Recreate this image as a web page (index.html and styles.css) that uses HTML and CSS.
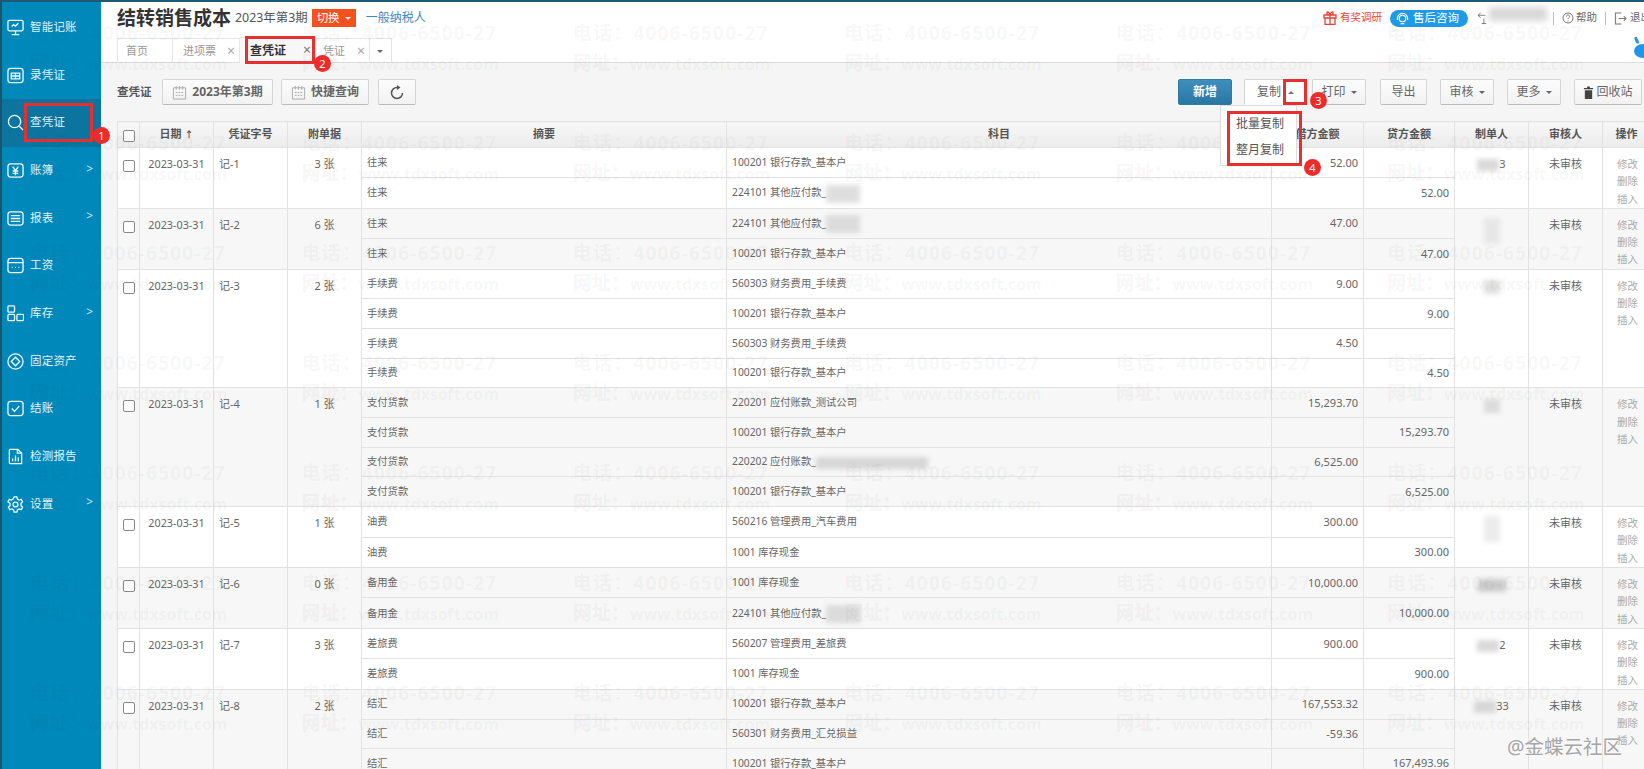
FILE: index.html
```html
<!DOCTYPE html>
<html lang="zh-CN">
<head>
<meta charset="utf-8">
<title>查凭证</title>
<link rel="stylesheet" href="styles.css">
</head>
<body>
<div class="topline"></div>
<div class="app">
  <nav class="side">
    <a class="nav"><svg class="ni" viewBox="0 0 18 18"><rect x="1" y="1.5" width="16" height="11" rx="1.5"/><path d="M9 12.5V16M5 16.5h8M5 8l2-2 2 1.5 3-3"/></svg><span>智能记账</span></a>
    <a class="nav"><svg class="ni" viewBox="0 0 18 18"><rect x="1" y="1.5" width="16" height="15" rx="3"/><path d="M4 6.5h10M4 12.5h10M4.5 6.5v6h9v-6M9 6.5v6M4.5 9.5h9"/></svg><span>录凭证</span></a>
    <a class="nav on"><svg class="ni" viewBox="0 0 18 18"><circle cx="8" cy="8" r="6.5"/><path d="M13 13l4 4"/></svg><span>查凭证</span></a>
    <a class="nav"><svg class="ni" viewBox="0 0 18 18"><rect x="1" y="2" width="16" height="14" rx="3"/><path d="M6 5l3 4 3-4M9 9v5M6 9.5h6M6 12h6"/></svg><span>账簿</span><i>&gt;</i></a>
    <a class="nav"><svg class="ni" viewBox="0 0 18 18"><rect x="1" y="2" width="16" height="14" rx="3"/><path d="M4 6h10M4 9h10M4 12h10"/></svg><span>报表</span><i>&gt;</i></a>
    <a class="nav"><svg class="ni" viewBox="0 0 18 18"><rect x="1" y="1.5" width="16" height="15" rx="3"/><path d="M1 6h16M5 11h1M8.500 11h1M12 11h1"/></svg><span>工资</span></a>
    <a class="nav"><svg class="ni" viewBox="0 0 18 18"><rect x="1" y="1" width="7" height="6.500" rx="1"/><rect x="1" y="10" width="7" height="6.500" rx="1"/><rect x="10.500" y="10" width="7" height="6.500" rx="1"/></svg><span>库存</span><i>&gt;</i></a>
    <a class="nav"><svg class="ni" viewBox="0 0 18 18"><circle cx="9" cy="9" r="8"/><path d="M9 4.500L13.500 9 9 13.500 4.500 9z"/></svg><span>固定资产</span></a>
    <a class="nav"><svg class="ni" viewBox="0 0 18 18"><rect x="1" y="1.500" width="16" height="15" rx="3"/><path d="M5 9l3 3 5-5.500"/></svg><span>结账</span></a>
    <a class="nav"><svg class="ni" viewBox="0 0 18 18"><path d="M3.500 1.500h8l4 4v11h-12a1 1 0 0 1-1-1v-13a1 1 0 0 1 1-1zM11 1.500v4h4.500M6 14v-3M9 14V8M12 14v-4"/></svg><span>检测报告</span></a>
    <a class="nav"><svg class="ni" viewBox="0 0 18 18"><path d="M7.500 1h3l.5 2.300 1.800 1 2.200-.8 1.500 2.600-1.700 1.600v2.600l1.700 1.600-1.500 2.600-2.200-.8-1.800 1-.5 2.300h-3l-.5-2.300-1.800-1-2.200.8-1.500-2.600 1.700-1.600V7.700L1 6.100l1.500-2.600 2.200.8 1.800-1z"/><circle cx="9" cy="9" r="2.600"/></svg><span>设置</span><i>&gt;</i></a>
  </nav>

  <main class="main">
    <header class="head">
      <h1>结转销售成本</h1>
      <span class="period">2023年第3期</span>
      <span class="switch">切换<b class="caret white"></b></span>
      <a class="taxer">一般纳税人</a>
      <div class="util">
        <svg class="gift" viewBox="0 0 14 14"><path d="M1 4h12v3H1zM2 7h10v6.500H2zM7 4v9.500M7 4C5 4 3.500 3 4 1.500S7 2 7 4c0-2 2.500-4 3-2.500S9 4 7 4"/></svg>
        <span class="survey">有奖调研</span>
        <span class="pill"><svg class="pi" viewBox="0 0 14 14"><circle cx="7" cy="7" r="3.500"/><path d="M1.500 7a5.500 5.500 0 0 1 11 0M1.500 6.500v2M12.500 6.500v2M5 12.500h4"/></svg>售后咨询</span>
        <svg class="ret" viewBox="0 0 12 14"><path d="M4 1L1 3.500 4 6M1 3.500h8M5 12.500h5M7.500 7v5.500"/></svg>
        <span class="blurtop"></span>
        <span class="sep"></span>
        <svg class="help" viewBox="0 0 12 12"><circle cx="6" cy="6" r="5"/><path d="M4.500 4.600c0-2 3-2 3 0 0 1.200-1.500 1.200-1.500 2.500M6 8.500v1"/></svg>
        <span>帮助</span>
        <span class="sep"></span>
        <svg class="exit" viewBox="0 0 14 14"><path d="M8 1H1.500v12H8M5 7h8M10.500 4.500L13 7l-2.500 2.500"/></svg>
        <span class="quit">退出</span>
      </div>
    </header>

    <div class="tabs">
      <span class="tab t1">首页</span>
      <span class="tab t2">进项票<em>×</em></span>
      <span class="tab t3 cur">查凭证<em>×</em></span>
      <span class="tab t4">凭证<em>×</em></span>
      <span class="tab t5"><b class="caret"></b></span>
      <svg class="bird" viewBox="0 0 12 24"><ellipse cx="11" cy="15" rx="9" ry="7"/><rect x="3" y="1" width="3" height="7" rx="1.500" transform="rotate(-25 4 4)"/></svg>
    </div>

    <div class="toolbar">
      <span class="tool-label">查凭证</span>
      <button class="btn b-period"><svg class="cal" viewBox="0 0 16 16"><path d="M1.500 3h13v12h-13zM4.500 1v4M8 1v4M11.500 1v4M4 8h2M7 8h2M10 8h2M4 11h2M7 11h2M10 11h2"/></svg>2023年第3期</button>
      <button class="btn b-quick"><svg class="cal" viewBox="0 0 16 16"><path d="M1.500 3h13v12h-13zM4.500 1v4M8 1v4M11.500 1v4M4 8h2M7 8h2M10 8h2M4 11h2M7 11h2M10 11h2"/></svg>快捷查询</button>
      <button class="btn b-refresh"><svg class="refresh" viewBox="0 0 16 16"><path d="M13.500 9A5.500 5.500 0 1 1 8 3.500"/><path class="head-fill" d="M8 1l3.500 2.500L8 6z"/></svg></button>
      <div class="actions">
        <button class="btn add">新增</button>
        <div class="copy">
          <button class="btn b-copy">复制<b class="caret up"></b></button>
          <ul class="menu"><li>批量复制</li><li>整月复制</li></ul>
        </div>
        <button class="btn lt b-print">打印<b class="caret"></b></button>
        <button class="btn lt b-export">导出</button>
        <button class="btn lt b-audit">审核<b class="caret"></b></button>
        <button class="btn lt b-more">更多<b class="caret"></b></button>
        <button class="btn lt b-bin"><svg class="bin" viewBox="0 0 12 14"><path d="M1 2h10v1.500H1zM4.500 .5h3V2h-3zM2 4.500h8V14H2z"/></svg>回收站</button>
      </div>
    </div>

    <table class="grid">
      <colgroup><col class="c1"><col class="c2"><col class="c3"><col class="c4"><col class="c5"><col class="c6"><col class="c7"><col class="c8"><col class="c9"><col class="c10"><col class="c11"></colgroup>
      <thead>
        <tr><th><span class="cb"></span></th><th>日期 <span class="arrow">↑</span></th><th>凭证字号</th><th>附单据</th><th>摘要</th><th>科目</th><th>借方金额</th><th>贷方金额</th><th>制单人</th><th>审核人</th><th>操作</th></tr>
      </thead>
      <tbody>
        <tr><td class="top" rowspan="2"><span class="cb"></span></td><td class="top date" rowspan="2">2023-03-31</td><td class="top no" rowspan="2">记-1</td><td class="top mid" rowspan="2">3 张</td><td class="s">往来</td><td class="s">100201 银行存款_基本户</td><td class="n">52.00</td><td class="n"></td><td class="top mid" rowspan="2"><span class="b b1"></span>3</td><td class="top mid" rowspan="2">未审核</td><td class="top ops" rowspan="2">修改<br>删除<br>插入</td></tr>
        <tr><td class="s">往来</td><td class="s">224101 其他应付款_<span class="b bs"></span></td><td class="n"></td><td class="n">52.00</td></tr>

        <tr class="alt"><td class="top" rowspan="2"><span class="cb"></span></td><td class="top date" rowspan="2">2023-03-31</td><td class="top no" rowspan="2">记-2</td><td class="top mid" rowspan="2">6 张</td><td class="s">往来</td><td class="s">224101 其他应付款_<span class="b bs"></span></td><td class="n">47.00</td><td class="n"></td><td class="top mid" rowspan="2"><span class="b b2"></span></td><td class="top mid" rowspan="2">未审核</td><td class="top ops" rowspan="2">修改<br>删除<br>插入</td></tr>
        <tr class="alt"><td class="s">往来</td><td class="s">100201 银行存款_基本户</td><td class="n"></td><td class="n">47.00</td></tr>

        <tr><td class="top" rowspan="4"><span class="cb"></span></td><td class="top date" rowspan="4">2023-03-31</td><td class="top no" rowspan="4">记-3</td><td class="top mid" rowspan="4">2 张</td><td class="s">手续费</td><td class="s">560303 财务费用_手续费</td><td class="n">9.00</td><td class="n"></td><td class="top mid" rowspan="4"><span class="b b3"></span></td><td class="top mid" rowspan="4">未审核</td><td class="top ops" rowspan="4">修改<br>删除<br>插入</td></tr>
        <tr><td class="s">手续费</td><td class="s">100201 银行存款_基本户</td><td class="n"></td><td class="n">9.00</td></tr>
        <tr><td class="s">手续费</td><td class="s">560303 财务费用_手续费</td><td class="n">4.50</td><td class="n"></td></tr>
        <tr><td class="s">手续费</td><td class="s">100201 银行存款_基本户</td><td class="n"></td><td class="n">4.50</td></tr>

        <tr class="alt"><td class="top" rowspan="4"><span class="cb"></span></td><td class="top date" rowspan="4">2023-03-31</td><td class="top no" rowspan="4">记-4</td><td class="top mid" rowspan="4">1 张</td><td class="s">支付货款</td><td class="s">220201 应付账款_测试公司</td><td class="n">15,293.70</td><td class="n"></td><td class="top mid" rowspan="4"><span class="b b3"></span></td><td class="top mid" rowspan="4">未审核</td><td class="top ops" rowspan="4">修改<br>删除<br>插入</td></tr>
        <tr class="alt"><td class="s">支付货款</td><td class="s">100201 银行存款_基本户</td><td class="n"></td><td class="n">15,293.70</td></tr>
        <tr class="alt"><td class="s">支付货款</td><td class="s">220202 应付账款_<span class="b bw"></span></td><td class="n">6,525.00</td><td class="n"></td></tr>
        <tr class="alt"><td class="s">支付货款</td><td class="s">100201 银行存款_基本户</td><td class="n"></td><td class="n">6,525.00</td></tr>

        <tr><td class="top" rowspan="2"><span class="cb"></span></td><td class="top date" rowspan="2">2023-03-31</td><td class="top no" rowspan="2">记-5</td><td class="top mid" rowspan="2">1 张</td><td class="s">油费</td><td class="s">560216 管理费用_汽车费用</td><td class="n">300.00</td><td class="n"></td><td class="top mid" rowspan="2"><span class="b b2"></span></td><td class="top mid" rowspan="2">未审核</td><td class="top ops" rowspan="2">修改<br>删除<br>插入</td></tr>
        <tr><td class="s">油费</td><td class="s">1001 库存现金</td><td class="n"></td><td class="n">300.00</td></tr>

        <tr class="alt"><td class="top" rowspan="2"><span class="cb"></span></td><td class="top date" rowspan="2">2023-03-31</td><td class="top no" rowspan="2">记-6</td><td class="top mid" rowspan="2">0 张</td><td class="s">备用金</td><td class="s">1001 库存现金</td><td class="n">10,000.00</td><td class="n"></td><td class="top mid" rowspan="2"><span class="b b6"></span></td><td class="top mid" rowspan="2">未审核</td><td class="top ops" rowspan="2">修改<br>删除<br>插入</td></tr>
        <tr class="alt"><td class="s">备用金</td><td class="s">224101 其他应付款_<span class="b bs"></span></td><td class="n"></td><td class="n">10,000.00</td></tr>

        <tr><td class="top" rowspan="2"><span class="cb"></span></td><td class="top date" rowspan="2">2023-03-31</td><td class="top no" rowspan="2">记-7</td><td class="top mid" rowspan="2">3 张</td><td class="s">差旅费</td><td class="s">560207 管理费用_差旅费</td><td class="n">900.00</td><td class="n"></td><td class="top mid" rowspan="2"><span class="b b1"></span>2</td><td class="top mid" rowspan="2">未审核</td><td class="top ops" rowspan="2">修改<br>删除<br>插入</td></tr>
        <tr><td class="s">差旅费</td><td class="s">1001 库存现金</td><td class="n"></td><td class="n">900.00</td></tr>

        <tr class="alt"><td class="top" rowspan="4"><span class="cb"></span></td><td class="top date" rowspan="4">2023-03-31</td><td class="top no" rowspan="4">记-8</td><td class="top mid" rowspan="4">2 张</td><td class="s">结汇</td><td class="s">100201 银行存款_基本户</td><td class="n">167,553.32</td><td class="n"></td><td class="top mid" rowspan="4"><span class="b b1"></span>33</td><td class="top mid" rowspan="4">未审核</td><td class="top ops" rowspan="4">修改<br>删除<br>插入</td></tr>
        <tr class="alt"><td class="s">结汇</td><td class="s">560301 财务费用_汇兑损益</td><td class="n">-59.36</td><td class="n"></td></tr>
        <tr class="alt"><td class="s">结汇</td><td class="s">100201 银行存款_基本户</td><td class="n"></td><td class="n">167,493.96</td></tr>
        <tr class="alt"><td class="s"></td><td class="s"></td><td class="n"></td><td class="n"></td></tr>
      </tbody>
    </table>
  </main>

  <div class="marks" aria-hidden="true">
    <div class="wm"><p>电话：4006-6500-27</p><p class="u"><b>网址：</b>www.tdxsoft.com</p></div><div class="wm"><p>电话：4006-6500-27</p><p class="u"><b>网址：</b>www.tdxsoft.com</p></div><div class="wm"><p>电话：4006-6500-27</p><p class="u"><b>网址：</b>www.tdxsoft.com</p></div><div class="wm"><p>电话：4006-6500-27</p><p class="u"><b>网址：</b>www.tdxsoft.com</p></div><div class="wm"><p>电话：4006-6500-27</p><p class="u"><b>网址：</b>www.tdxsoft.com</p></div><div class="wm"><p>电话：4006-6500-27</p><p class="u"><b>网址：</b>www.tdxsoft.com</p></div>
    <div class="wm"><p>电话：4006-6500-27</p><p class="u"><b>网址：</b>www.tdxsoft.com</p></div><div class="wm"><p>电话：4006-6500-27</p><p class="u"><b>网址：</b>www.tdxsoft.com</p></div><div class="wm"><p>电话：4006-6500-27</p><p class="u"><b>网址：</b>www.tdxsoft.com</p></div><div class="wm"><p>电话：4006-6500-27</p><p class="u"><b>网址：</b>www.tdxsoft.com</p></div><div class="wm"><p>电话：4006-6500-27</p><p class="u"><b>网址：</b>www.tdxsoft.com</p></div><div class="wm"><p>电话：4006-6500-27</p><p class="u"><b>网址：</b>www.tdxsoft.com</p></div>
    <div class="wm"><p>电话：4006-6500-27</p><p class="u"><b>网址：</b>www.tdxsoft.com</p></div><div class="wm"><p>电话：4006-6500-27</p><p class="u"><b>网址：</b>www.tdxsoft.com</p></div><div class="wm"><p>电话：4006-6500-27</p><p class="u"><b>网址：</b>www.tdxsoft.com</p></div><div class="wm"><p>电话：4006-6500-27</p><p class="u"><b>网址：</b>www.tdxsoft.com</p></div><div class="wm"><p>电话：4006-6500-27</p><p class="u"><b>网址：</b>www.tdxsoft.com</p></div><div class="wm"><p>电话：4006-6500-27</p><p class="u"><b>网址：</b>www.tdxsoft.com</p></div>
    <div class="wm"><p>电话：4006-6500-27</p><p class="u"><b>网址：</b>www.tdxsoft.com</p></div><div class="wm"><p>电话：4006-6500-27</p><p class="u"><b>网址：</b>www.tdxsoft.com</p></div><div class="wm"><p>电话：4006-6500-27</p><p class="u"><b>网址：</b>www.tdxsoft.com</p></div><div class="wm"><p>电话：4006-6500-27</p><p class="u"><b>网址：</b>www.tdxsoft.com</p></div><div class="wm"><p>电话：4006-6500-27</p><p class="u"><b>网址：</b>www.tdxsoft.com</p></div><div class="wm"><p>电话：4006-6500-27</p><p class="u"><b>网址：</b>www.tdxsoft.com</p></div>
    <div class="wm"><p>电话：4006-6500-27</p><p class="u"><b>网址：</b>www.tdxsoft.com</p></div><div class="wm"><p>电话：4006-6500-27</p><p class="u"><b>网址：</b>www.tdxsoft.com</p></div><div class="wm"><p>电话：4006-6500-27</p><p class="u"><b>网址：</b>www.tdxsoft.com</p></div><div class="wm"><p>电话：4006-6500-27</p><p class="u"><b>网址：</b>www.tdxsoft.com</p></div><div class="wm"><p>电话：4006-6500-27</p><p class="u"><b>网址：</b>www.tdxsoft.com</p></div><div class="wm"><p>电话：4006-6500-27</p><p class="u"><b>网址：</b>www.tdxsoft.com</p></div>
    <div class="wm"><p>电话：4006-6500-27</p><p class="u"><b>网址：</b>www.tdxsoft.com</p></div><div class="wm"><p>电话：4006-6500-27</p><p class="u"><b>网址：</b>www.tdxsoft.com</p></div><div class="wm"><p>电话：4006-6500-27</p><p class="u"><b>网址：</b>www.tdxsoft.com</p></div><div class="wm"><p>电话：4006-6500-27</p><p class="u"><b>网址：</b>www.tdxsoft.com</p></div><div class="wm"><p>电话：4006-6500-27</p><p class="u"><b>网址：</b>www.tdxsoft.com</p></div><div class="wm"><p>电话：4006-6500-27</p><p class="u"><b>网址：</b>www.tdxsoft.com</p></div>
    <div class="wm"><p>电话：4006-6500-27</p><p class="u"><b>网址：</b>www.tdxsoft.com</p></div><div class="wm"><p>电话：4006-6500-27</p><p class="u"><b>网址：</b>www.tdxsoft.com</p></div><div class="wm"><p>电话：4006-6500-27</p><p class="u"><b>网址：</b>www.tdxsoft.com</p></div><div class="wm"><p>电话：4006-6500-27</p><p class="u"><b>网址：</b>www.tdxsoft.com</p></div><div class="wm"><p>电话：4006-6500-27</p><p class="u"><b>网址：</b>www.tdxsoft.com</p></div><div class="wm"><p>电话：4006-6500-27</p><p class="u"><b>网址：</b>www.tdxsoft.com</p></div>
  </div>

  <div class="hl h1a"></div><div class="hl h2a"></div><div class="hl h3a"></div><div class="hl h4a"></div>
  <span class="dot d1">1</span><span class="dot d2">2</span><span class="dot d3">3</span><span class="dot d4">4</span>
  <span class="credit">@金蝶云社区</span>
</div>
</body>
</html>
```
FILE: styles.css
```css
* { box-sizing: border-box; }
html, body { margin: 0; height: 100%; overflow: hidden; }
body { width: 1644px; height: 769px; background: #f5f5f5; color: #666; font: 11px/1.3 "Noto Sans", "Noto Sans CJK SC", sans-serif; }
.topline { height: 2px; background: #1d5a78; }
.app { position: relative; display: flex; height: 767px; overflow: hidden; }

/* sidebar */
.side { flex: 0 0 101px; padding-top: 1.500px; background: #0088bb; border-left: 2px solid #17566f; }
.nav { display: flex; align-items: center; gap: 6px; height: 47.700px; padding-left: 5px; color: #e4f4fa; font-size: 11.500px; }
.nav.on { background: #0b759f; }
.nav i { margin-left: auto; padding: 0 8px 4px 0; font-style: normal; font-size: 12px; color: #cdeaf5; }
.nav span { letter-spacing: .2px; }
.ni { flex: none; width: 17px; height: 17px; fill: none; stroke: #eef9fd; stroke-width: 1.400; }

/* main */
.main { flex: 1; min-width: 0; }
.head { display: flex; align-items: center; height: 34px; padding: 0 0 2px 16px; background: #fff; }
.head h1 { margin: 0; font-size: 19px; font-weight: 700; color: #333; line-height: 1; }
.period { margin-left: 4px; font-size: 12.400px; color: #555; }
.switch { display: flex; align-items: center; gap: 5px; height: 18px; margin-left: 4px; padding: 0 5px; background: #f4511e; color: #fff; font-size: 11.500px; }
.taxer { margin-left: 10px; color: #3a89c0; font-size: 12px; }
.util { display: flex; align-items: center; margin-left: auto; font-size: 10.500px; color: #666; }
.gift { width: 14px; height: 14px; fill: none; stroke: #e5423a; stroke-width: 1.300; }
.survey { margin: 0 8px 0 3px; color: #e5423a; font-size: 10.500px; }
.pill { display: flex; align-items: center; gap: 4px; width: 78px; height: 17px; padding-left: 6px; border-radius: 9px; background: #1e9be8; color: #fff; font-size: 11.500px; }
.pi { width: 13px; height: 13px; fill: none; stroke: #fff; stroke-width: 1.300; }
.ret { width: 11px; height: 13px; margin-left: 9px; fill: none; stroke: #777; stroke-width: 1; }
.blurtop { width: 58px; height: 14px; margin: -8px 6px 0 1px; background: #d8d8d8; filter: blur(3px); }
.sep { width: 1px; height: 13px; margin: 0 8px 0 0; background: #bbb; }
.help { width: 12px; height: 12px; margin: 0 2px 0 0; fill: none; stroke: #777; }
.exit { width: 13px; height: 13px; margin-right: 3px; fill: none; stroke: #777; stroke-width: 1.100; }
.help + span { margin-right: 8px; }
.quit { width: 14px; overflow: hidden; white-space: nowrap; flex: none; }

.caret { display: inline-block; width: 0; height: 0; border: 3.500px solid transparent; border-top-color: #666; border-bottom-width: 0; vertical-align: middle; }
.caret.white { border-top-color: #fff; }
.caret.up { border-top-width: 0; border-bottom: 3.500px solid #777; }

/* tabs */
.tabs { position: relative; display: flex; height: 27px; padding: 2px 0 0 16px; background: #fff; border-bottom: 1px solid #ddd; font-size: 11px; color: #999; }
.tab { display: flex; align-items: center; justify-content: space-between; height: 25px; padding: 0 4px 0 8px; border: 1px solid #e6e6e6; border-bottom: 0; border-left-width: 0; }
.tab em { font-style: normal; font-size: 14px; color: #aaa; }
.t1 { width: 56px; border-left-width: 1px; }
.t2 { width: 67px; padding-left: 10px; }
.t3 { width: 76px; height: 26px; margin-top: -1px; padding-left: 10px; background: #f7f7f7; color: #333; font-weight: 700; font-size: 12px; }
.t3 em { color: #777; font-weight: 400; }
.t4 { width: 54px; padding-left: 7px; }
.t5 { width: 22px; padding: 0 0 0 7px; }
.bird { position: absolute; right: 0; top: 0; width: 12px; height: 24px; fill: #2196e8; }

/* toolbar */
.toolbar { display: flex; align-items: center; height: 58px; padding: 0 2px 0 16px; }
.tool-label { width: 45px; font-size: 11.500px; font-weight: 700; color: #555; }
.btn { display: inline-flex; align-items: center; justify-content: center; gap: 5px; height: 26px; padding: 0; border: 1px solid #d5d5d5; border-bottom-color: #bbb; border-radius: 2px; background: linear-gradient(#fcfcfc, #f2f2f2); color: #666; font: inherit; font-size: 12px; }
.b-period { width: 111px; margin-right: 8px; font-weight: 700; }
.b-quick { width: 88px; margin-right: 9px; font-weight: 700; }
.b-refresh { width: 38px; }
.cal { width: 15px; height: 15px; fill: none; stroke: #aaa; stroke-width: 1; }
.refresh { width: 16px; height: 16px; fill: none; stroke: #555; stroke-width: 1.500; }
.refresh .head-fill { fill: #555; stroke: none; }
.actions { display: flex; align-items: center; margin-left: auto; }
.add { width: 54px; margin-right: 12px; border-color: #2a7ca8; background: linear-gradient(#3e8fbd, #2a76a3); color: #fff; font-weight: 700; }
.copy { position: relative; margin-right: 5px; }
.b-copy { width: 63px; justify-content: flex-start; padding-left: 12px; gap: 7px; background: #fff; border-bottom-color: #fff; border-radius: 2px 2px 0 0; }
.menu { position: absolute; left: -24px; top: 26px; width: 77px; height: 61px; margin: 0; padding: 5px 0 0 15px; list-style: none; background: #fff; border: 1px solid #ddd; font-size: 12px; color: #555; z-index: 2; }
.menu li { height: 26px; line-height: 26px; }
.b-print { width: 54px; margin-right: 14px; }
.b-export { width: 47px; margin-right: 13px; }
.b-audit { width: 54px; margin-right: 13px; }
.b-more { width: 54px; margin-right: 13px; }
.b-bin { width: 68px; gap: 2px; }
.bin { width: 11px; height: 13px; fill: #444; }

/* table */
.grid { width: 1533px; margin-left: 16px; table-layout: fixed; border-collapse: collapse; background: #fff; }
.c1 { width: 22px; } .c2, .c3, .c4, .c9, .c10 { width: 74px; } .c5 { width: 365px; } .c6 { width: 545px; } .c7 { width: 92px; } .c8 { width: 91px; } .c11 { width: 48px; }
.grid th { height: 26px; padding: 0; border: 1px solid #e2e2e2; background: linear-gradient(#f7f7f7, #ececec); color: #555; font-size: 11px; font-weight: 700; text-align: center; }
.grid td { height: 29.680px; padding: 0; border: 1px solid #e2e2e2; }
.grid tr.alt td { background: #f7f7f7; }
.arrow { font-size: 9px; }
.cb { display: block; width: 12px; height: 12px; margin: 2px 0 0 5px; border: 1px solid #888; border-radius: 2px; background: #fff; }
.top { vertical-align: top; padding-top: 9px !important; }
.top > .cb { margin-top: 3px; }
.date { font-size: 10.800px; text-align: center; }
.no { padding-left: 5px !important; font-size: 11px; }
.mid { text-align: center; font-size: 11px; }
.s { padding-left: 5px !important; font-size: 10.300px; }
.n { padding-right: 5px !important; text-align: right; font-size: 11px; }
.ops { padding-left: 14px !important; color: #aaa; font-size: 10.500px; line-height: 17.300px; padding-top: 8px !important; }

/* blurred-out names */
.b { display: inline-block; vertical-align: middle; background: #c9c9c9; filter: blur(2.500px); }
.bs { width: 34px; height: 18px; margin: -6px 0; opacity: .6; }
.bw { width: 112px; height: 12px; margin: -2px 0; opacity: .7; }
.b1 { width: 22px; height: 12px; opacity: .7; }
.b2 { width: 16px; height: 26px; opacity: .35; }
.b3 { width: 16px; height: 14px; opacity: .6; }
.b6 { width: 28px; height: 13px; opacity: .95; }

/* watermark */
.marks { position: absolute; left: 0; top: 0; display: grid; grid-template-columns: repeat(6, 271.400px); grid-auto-rows: 110px; padding: 17px 0 0 30px; color: rgba(50, 50, 50, .05); font-family: "Open Sans", "Noto Sans CJK SC", sans-serif; font-weight: 700; pointer-events: none; white-space: nowrap; }
.wm p { margin: 0; height: 30px; line-height: 28px; font-size: 19px; letter-spacing: 1.200px; }
.wm .u { font-size: 15.900px; letter-spacing: 0; }
.wm .u b { font-size: 19px; }

/* tutorial annotations */
.hl { position: absolute; border: 3px solid #e5302f; pointer-events: none; }
.h1a { left: 24px; top: 101px; width: 69px; height: 39px; }
.h2a { left: 245px; top: 34px; width: 70px; height: 28px; }
.h3a { left: 1283px; top: 77px; width: 24px; height: 26px; z-index: 3; }
.h4a { left: 1227px; top: 109px; width: 75px; height: 55px; z-index: 3; }
.dot { position: absolute; width: 17px; height: 17px; border-radius: 50%; background: #ee2b2b; color: #fff; font-size: 11px; line-height: 17px; text-align: center; z-index: 3; }
.d1 { left: 93px; top: 125px; }
.d2 { left: 314px; top: 53px; }
.d3 { left: 1310px; top: 90px; }
.d4 { left: 1304px; top: 157px; }
.credit { position: absolute; left: 1507px; top: 731px; color: #a5a5a5; font-size: 19.500px; line-height: 28px; white-space: nowrap; text-shadow: 0 0 2px #fff; }
```
